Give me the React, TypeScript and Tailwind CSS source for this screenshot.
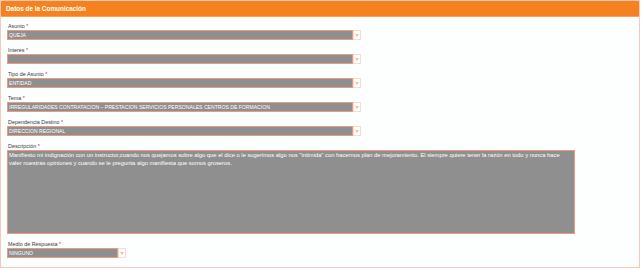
const font = { fontFamily: '"Liberation Sans", Arial, sans-serif' };

type Field = { label: string; value: string };

const fields: Field[] = [
  { label: "Asunto", value: "QUEJA" },
  { label: "Interes", value: "" },
  { label: "Tipo de Asunto", value: "ENTIDAD" },
  { label: "Tema", value: "IRREGULARIDADES CONTRATACION – PRESTACION SERVICIOS PERSONALES CENTROS DE FORMACION" },
  { label: "Dependencia Destino", value: "DIRECCION REGIONAL" },
];

const Label = ({ text }: { text: string }) => (
  <div className="h-[7px] text-[5.4px] leading-[7px] text-[#3a3a3a] pl-[1px]">
    {text} <span className="text-[#e0301e]">*</span>
  </div>
);

const Arrow = () => (
  <div className="w-[8px] h-[10px] border border-[#f9dccf] bg-white flex items-center justify-center">
    <svg width="4" height="3" viewBox="0 0 4 3">
      <path d="M0 0 L4 0 L2 3 Z" fill="#f5bfa8" />
    </svg>
  </div>
);

const Select = ({ value, width }: { value: string; width: string }) => (
  <div className="flex">
    <div className={`${width} h-[10px] bg-[#8f8f8f] border border-[#ea9a7e] text-white text-[5.1px] leading-[8px] pl-[1px] whitespace-nowrap overflow-hidden`}>
      {value}
    </div>
    <Arrow />
  </div>
);

export default function App() {
  return (
    <div className="w-[642px] h-[270px] bg-white" style={font}>
      <div className="w-[640px] h-[268px] border border-[#f6c9ba] bg-[#fdfefe] flex flex-col">
        <div className="h-[16px] bg-[#f5821f] border-b border-[#f9a35a] text-white font-bold text-[6.4px] leading-[15px] pl-[5px]">
          Datos de la Comunicación
        </div>
        <div className="flex flex-col gap-[7px] pt-[6px] pl-[6px]">
          {fields.map((f) => (
            <div key={f.label} className="flex flex-col">
              <Label text={f.label} />
              <Select value={f.value} width="w-[346px]" />
            </div>
          ))}
          <div className="flex flex-col">
            <Label text="Descripción" />
            <div className="w-[568px] h-[84px] bg-[#8f8f8f] border border-[#ea9a7e] text-white text-[5.8px] leading-[8px] pl-[1px] pr-[4px]">
              Manifiesto mi indignación con un instructor,cuando nos quejamos sobre algo que el dice o le sugerimos algo nos "intimida" con hacernos plan de mejoramiento. El siempre quiere tener la razón en todo y nunca hace valer nuestras opiniones y cuando se le pregunta algo manifiesta que somos groseros.
            </div>
          </div>
          <div className="flex flex-col">
            <Label text="Medio de Respuesta" />
            <Select value="NINGUNO" width="w-[111px]" />
          </div>
        </div>
      </div>
    </div>
  );
}
